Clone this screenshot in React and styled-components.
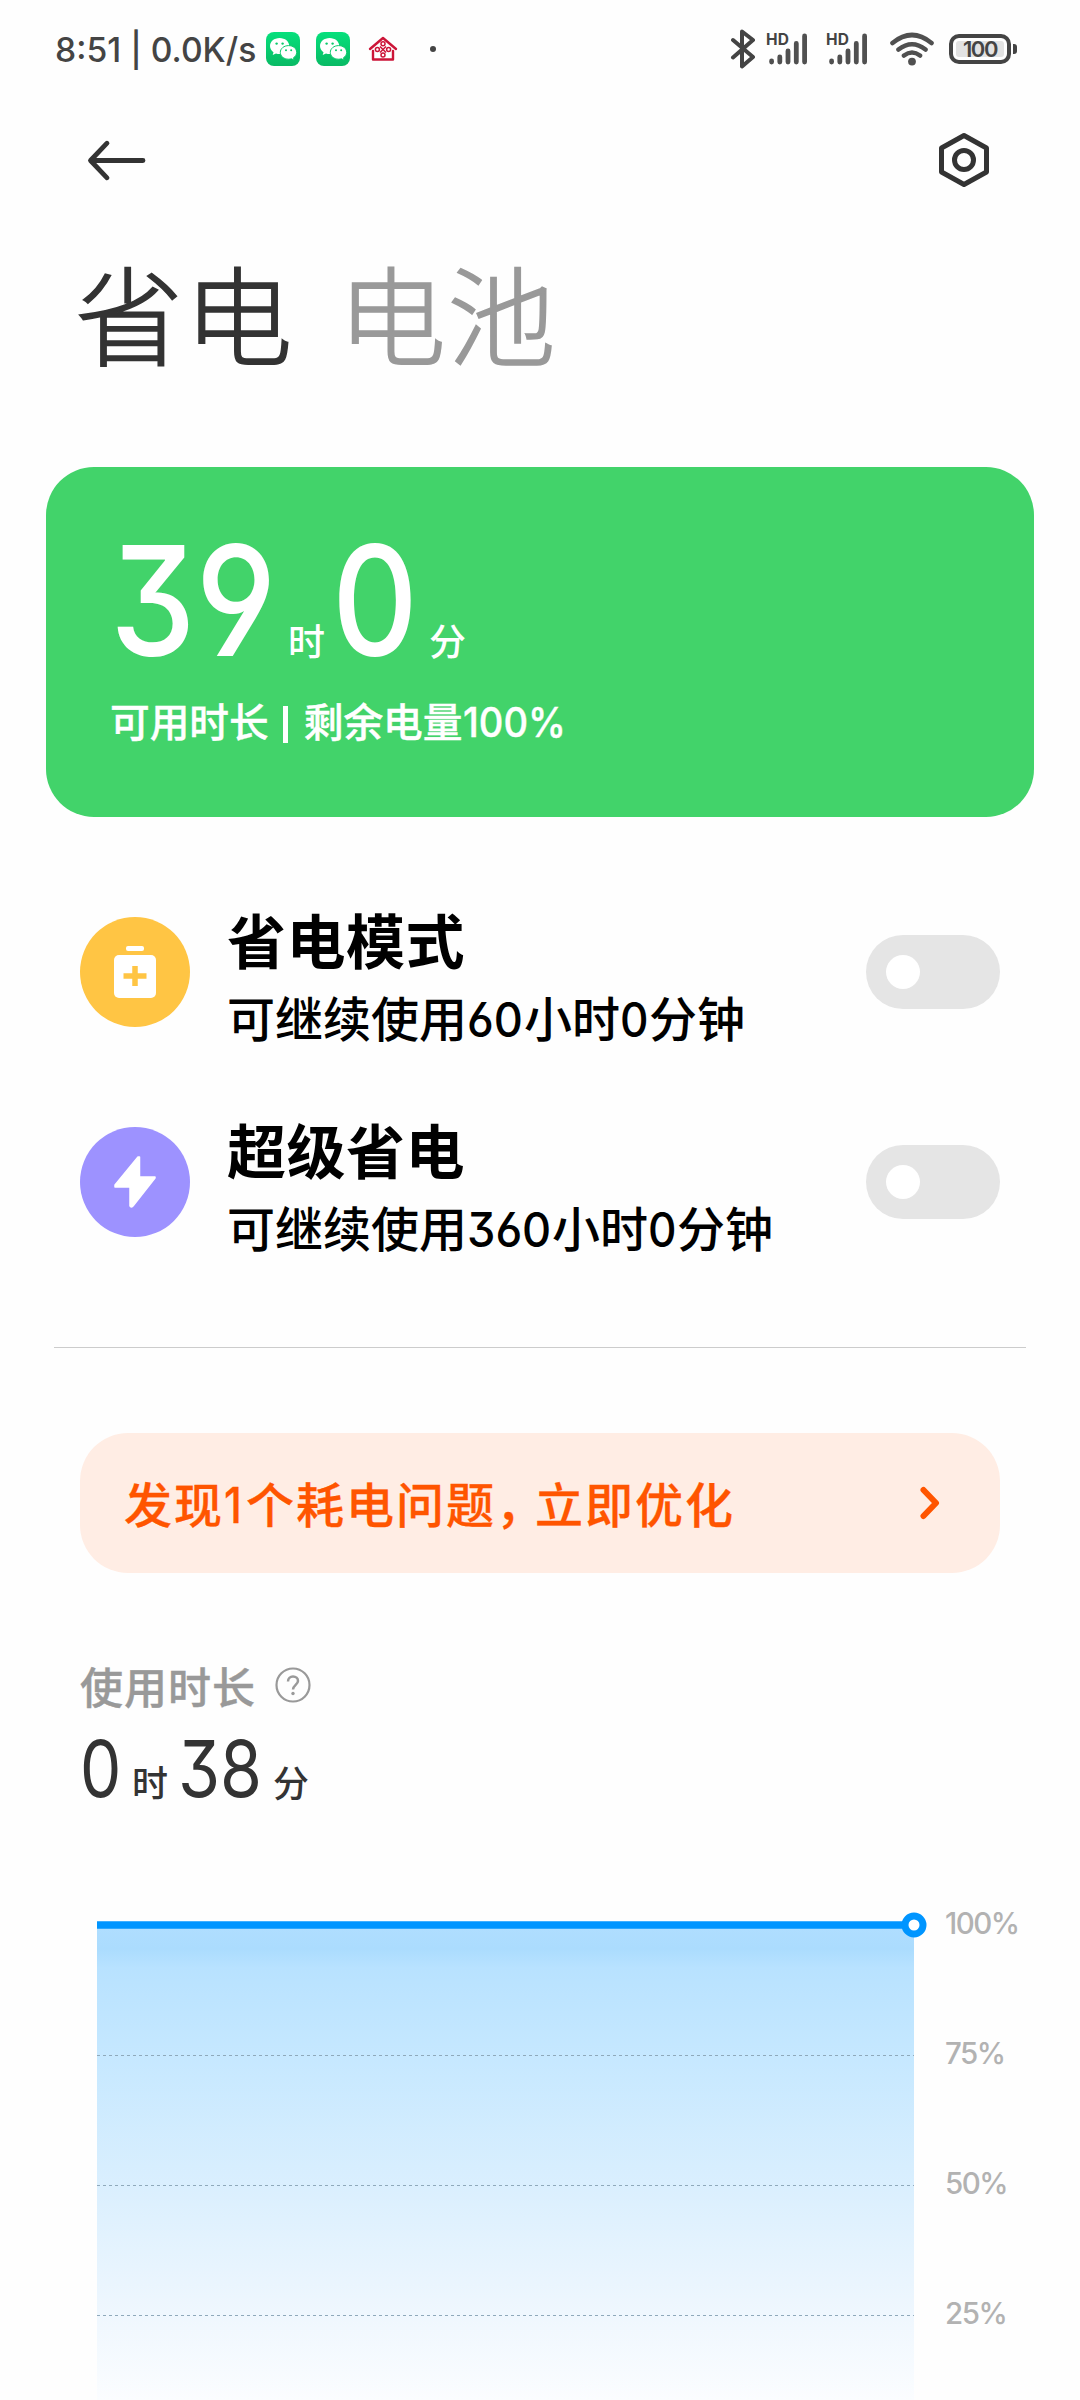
import React, { useState } from 'react'
import styled, { createGlobalStyle } from 'styled-components'

const GlobalStyle = createGlobalStyle`
  * {
    box-sizing: border-box;
  }
  body {
    margin: 0;
    background: #fefefe;
    font-family: 'Noto Sans CJK SC', 'Noto Sans', sans-serif;
    color: #333;
  }
`

const Screen = styled.div`
  width: 1080px;
  height: 2400px;
  overflow: hidden;
  background: #fefefe;
  display: flex;
  flex-direction: column;
`

// numbers and latin text, narrower than the font draws them
const Num = styled.span`
  display: inline-block;
  font-family: Inter, Roboto, sans-serif;
  font-feature-settings: 'cv09', 'ss01';
  font-size: ${({ size }) => size}px;
  font-weight: ${({ weight }) => weight || 500};
  line-height: 1;
  width: ${({ w }) => w}px;
  transform: scaleX(${({ squeeze }) => squeeze || 0.86});
  transform-origin: left;
  white-space: pre;
`

// status bar
const StatusBar = styled.header`
  height: 98px;
  flex-shrink: 0;
  padding: 0 63px 0 55px;
  display: flex;
  justify-content: space-between;
  align-items: center;
  color: #444;
`
const StatusSide = styled.div`
  display: flex;
  align-items: center;
`
const StatusText = styled.div`
  padding-top: 2px;
  display: flex;
`
const StatusIcon = styled.svg`
  display: block;
  flex-shrink: 0;
  margin-left: ${({ ml }) => ml || 0}px;
`
const Signal = styled.div`
  width: 42px;
  height: 32px;
  margin-left: ${({ ml }) => ml}px;
  display: grid;

  > * {
    grid-area: 1 / 1;
  }
`
const SignalLabel = styled.span`
  font: 700 15.5px/14px Inter, sans-serif;
  letter-spacing: 0.2px;
`
const Battery = styled.div`
  margin-left: 15px;
  width: 62px;
  height: 30px;
  border: 4px solid #444;
  border-radius: 10px;
  padding: 3px;
`
const BatteryLevel = styled.div`
  height: 16px;
  border-radius: 3px;
  background: #e2e2e2;
  display: flex;
  justify-content: center;
  align-items: center;
  font: 600 22px/16px Inter, sans-serif;
  letter-spacing: -1.4px;
`
const BatteryTip = styled.i`
  width: 4px;
  height: 10px;
  margin-left: 2px;
  border-radius: 0 3px 3px 0;
  background: #444;
`

// nav
const NavBar = styled.nav`
  height: 124px;
  flex-shrink: 0;
  padding: 0 90px 0 87px;
  display: flex;
  justify-content: space-between;
  align-items: center;
`

const Tabs = styled.div`
  height: 245px;
  flex-shrink: 0;
  padding: 24px 0 0 75px;
  display: flex;
  gap: 44px;
`
const Tab = styled.h1`
  margin: 0;
  font-size: 108px;
  font-weight: 300;
  line-height: 130px;
  letter-spacing: 1.5px;
  -webkit-text-stroke: 1.6px currentColor;
  color: ${({ $active }) => ($active ? '#333' : '#999')};
`

// green card
const Card = styled.section`
  height: 350px;
  flex-shrink: 0;
  margin: 0 46px;
  padding: 57px 0 0 64px;
  border-radius: 48px;
  background: #42d36a;
  color: #fff;
`
const Duration = styled.div`
  display: flex;
  align-items: baseline;
  height: ${({ h }) => h}px;
`
const Unit = styled.span`
  font-size: ${({ size }) => size}px;
  font-weight: 500;
  line-height: 1;
  margin-right: ${({ after }) => after || 0}px;
`
const CardNote = styled.p`
  margin: 0;
  font-size: 39.7px;
  font-weight: 500;
  line-height: 50px;
  white-space: pre;
  -webkit-text-stroke: 0.4px currentColor;
`
const Bar = styled.i`
  display: inline-block;
  width: 5px;
  height: 37px;
  margin: 0 16px 0 14px;
  vertical-align: -6px;
  background: currentColor;
`

// power modes
const Modes = styled.section`
  flex-shrink: 0;
  height: 531px;
  margin: 0 54px;
  padding-top: 50px;
  border-bottom: 1px solid #ccc;
`
const ModeRow = styled.div`
  height: 210px;
  padding: 0 26px;
  display: flex;
  align-items: center;
`
const ModeBadge = styled.div`
  width: 110px;
  height: 110px;
  border-radius: 50%;
  background: ${({ color }) => color};
  display: flex;
  justify-content: center;
  align-items: center;
`
const ModeText = styled.div`
  flex: 1;
  padding: 8px 0 0 37px;
  color: #000;
`
const ModeTitle = styled.h2`
  margin: 0;
  font-size: 59px;
  font-weight: 700;
  line-height: 80px;
  letter-spacing: 0.5px;
`
const ModeHint = styled.p`
  margin: 0;
  font-size: 48px;
  font-weight: 500;
  line-height: 74px;
  white-space: pre;
`
const Switch = styled.button`
  width: 134px;
  height: 74px;
  padding: 0 20px;
  border: 0;
  border-radius: 37px;
  background: ${({ $on }) => ($on ? '#42d36a' : '#e5e5e5')};
  display: flex;
  justify-content: ${({ $on }) => ($on ? 'flex-end' : 'flex-start')};
  align-items: center;
`
const Knob = styled.span`
  width: 34px;
  height: 34px;
  border-radius: 50%;
  background: #fff;
`

// warning banner
const Banner = styled.a`
  height: 140px;
  flex-shrink: 0;
  margin: 85px 80px 0;
  padding: 0 60px 0 44px;
  border-radius: 48px;
  background: #ffede4;
  color: #ff5500;
  display: flex;
  justify-content: space-between;
  align-items: center;
`
const BannerText = styled.span`
  margin-top: -3px;
  font-size: 48px;
  font-weight: 500;
  line-height: 72px;
  letter-spacing: 2px;
  -webkit-text-stroke: 0.3px currentColor;
`
// half-width comma
const Comma = styled.span`
  font-feature-settings: 'halt';
  margin-right: 13px;
`

// usage
const Usage = styled.section`
  flex-shrink: 0;
  height: 302px;
  padding: 80px 80px 0;
`
const UsageTitle = styled.h3`
  margin: 0 0 13px;
  height: 64px;
  display: flex;
  align-items: center;
  gap: 19px;
  font-size: 43px;
  font-weight: 500;
  letter-spacing: 1px;
  color: #999;
  -webkit-text-stroke: 0.4px currentColor;
`

// chart
const Chart = styled.section`
  flex: 1;
  padding-left: 97px;
  padding-top: 37px;
  display: flex;
`
const Labels = styled.div`
  padding-left: 16px;
  display: flex;
  flex-direction: column;
`
const Label = styled.span`
  height: 130px;
  font: 500 29.5px/22px Inter, sans-serif;
  letter-spacing: -1.5px;
  color: #b2b2b2;
`

const WeChat = ({ ml }) => (
  <StatusIcon ml={ml} width="34" height="34" viewBox="0 0 34 34">
    <defs>
      <linearGradient id="wx" x1="0" y1="0" x2="0" y2="1">
        <stop offset="0" stopColor="#06e07c" />
        <stop offset="1" stopColor="#08ba64" />
      </linearGradient>
    </defs>
    <rect width="34" height="34" rx="8" fill="url(#wx)" />
    <path d="M13.600 6C8.100 6 4 9.600 4 14c0 2.600 1.400 4.700 3.500 6.200L6.700 23l3.300-1.600c1.100.4 2.300.6 3.600.6 5.500 0 9.700-3.600 9.700-8S19.100 6 13.600 6z" fill="#fff" />
    <path d="M22.600 13.600c-4.700 0-8.300 3-8.300 6.800s3.600 6.800 8.300 6.800c1 0 2-.1 2.900-.4l2.700 1.300-.7-2.400c2-1.300 3.200-3.200 3.200-5.300 0-3.800-3.500-6.800-8.100-6.800z" fill="#fff" stroke="#0bc96c" strokeWidth="1" />
    <g fill="#0bc96c">
      <circle cx="10.600" cy="11.600" r="1.200" />
      <circle cx="16.600" cy="11.600" r="1.200" />
      <circle cx="20" cy="18.200" r="1" />
      <circle cx="25.200" cy="18.200" r="1" />
    </g>
  </StatusIcon>
)

const SignalIcon = ({ ml }) => (
  <Signal ml={ml}>
    <StatusIcon width="42" height="32" viewBox="0 0 42 32" stroke="#505050" strokeWidth="4.800" strokeLinecap="round">
      <path d="M5.600 28v1M13.800 24v5M22 18v11M30.300 10.500v18.500M38.600 3v26" />
    </StatusIcon>
    <SignalLabel>HD</SignalLabel>
  </Signal>
)

const BatteryIcon = () => (
  <svg width="42" height="54" viewBox="0 0 42 54">
    <rect x="12" y="1" width="18" height="5" rx="2" fill="#fff" />
    <rect x="0" y="10" width="42" height="43" rx="5" fill="#fff" />
    <path d="M21 21v20M9.500 31h23" stroke="#ffc544" strokeWidth="5.500" />
  </svg>
)

const BoltIcon = () => (
  <svg width="42" height="52" viewBox="0 0 42 52">
    <path d="M24 1 1 29v2h15v19q1 2 3 0L41 22v-1H25.500V1z" fill="#fff" stroke="#fff" strokeWidth="1.500" strokeLinejoin="round" />
  </svg>
)

const modes = [
  { title: '省电模式', hours: '60', numW: 57, color: '#ffc544', icon: <BatteryIcon /> },
  { title: '超级省电', hours: '360', numW: 85, color: '#9d92ff', icon: <BoltIcon /> },
]

const Mode = ({ title, hours, numW, color, icon }) => {
  const [on, setOn] = useState(false)

  return (
    <ModeRow>
      <ModeBadge color={color}>{icon}</ModeBadge>
      <ModeText>
        <ModeTitle>{title}</ModeTitle>
        <ModeHint>
          可继续使用<Num size={48} w={numW} squeeze={0.94}>{hours}</Num>小时<Num size={48} w={29} squeeze={0.92}>0</Num>分钟
        </ModeHint>
      </ModeText>
      <Switch $on={on} onClick={() => setOn(!on)}>
        <Knob />
      </Switch>
    </ModeRow>
  )
}

const App = () => {
  return (
    <Screen>
      <GlobalStyle />
      <StatusBar>
        <StatusSide>
          <StatusText>
            <Num size={34} w={203} weight={550} squeeze={0.99}>8:51 | 0.0K/s</Num>
          </StatusText>
          <WeChat ml={8} />
          <WeChat ml={16} />
          <StatusIcon ml={18} width="30" height="26" viewBox="0 0 30 26" fill="none" stroke="#cc1538">
            <path d="M2 13 15 2l13 11M5 15v8.500h20V15" strokeWidth="2.400" strokeLinecap="round" strokeLinejoin="round" />
            <g strokeWidth="1.500">
              <circle cx="15" cy="7.800" r="2" />
              <circle cx="15" cy="19" r="2" />
              <circle cx="9.400" cy="13.400" r="2" />
              <circle cx="20.600" cy="13.400" r="2" />
              <path d="M12 10.500l6 6M18 10.500l-6 6" />
            </g>
          </StatusIcon>
          <StatusIcon ml={32} width="6" height="6">
            <circle cx="3" cy="3" r="3" fill="#444" />
          </StatusIcon>
        </StatusSide>
        <StatusSide>
          <StatusIcon width="26" height="40" viewBox="0 0 26 40" fill="none" stroke="#444" strokeWidth="4" strokeLinecap="round" strokeLinejoin="round">
            <path d="M3 11l20 17-11 9.500V2.500L23 11 3 28.500" />
          </StatusIcon>
          <SignalIcon ml={10} />
          <SignalIcon ml={18} />
          <StatusIcon ml={20} width="46" height="34" viewBox="0 0 46 34" fill="none" stroke="#505050" strokeWidth="4.600" strokeLinecap="round">
            <path d="M4.500 11Q24-5 43.500 11M10.500 17.500q13.500-10.500 27 0M16 23.500q8-6 16 0" />
            <circle cx="24" cy="29.600" r="3.900" fill="#505050" stroke="none" />
          </StatusIcon>
          <Battery>
            <BatteryLevel>100</BatteryLevel>
          </Battery>
          <BatteryTip />
        </StatusSide>
      </StatusBar>

      <NavBar>
        <svg width="60" height="44" viewBox="0 0 60 44" fill="none" stroke="#333" strokeWidth="4.800" strokeLinecap="round" strokeLinejoin="round">
          <path d="M56 22.500H4M20 5.200 3.500 22.500 20 39.800" />
        </svg>
        <svg width="52" height="56" viewBox="0 0 52 56" fill="none" stroke="#333" strokeWidth="5" strokeLinejoin="round">
          <path d="M26 3.500 48.500 16v24L26 52.500 3.500 40V16z" />
          <circle cx="26" cy="28" r="9.500" />
        </svg>
      </NavBar>

      <Tabs>
        <Tab $active>省电</Tab>
        <Tab>电池</Tab>
      </Tabs>

      <Card>
        <Duration h={171}>
          <Num size={153} w={178} squeeze={0.89}>39</Num>
          <Unit size={37} after={7}>时</Unit>
          <Num size={153} w={97} squeeze={0.87}>0</Num>
          <Unit size={37}>分</Unit>
        </Duration>
        <CardNote>
          可用时长<Bar />剩余电量<Num size={40.500} w={100} squeeze={0.94}>100%</Num>
        </CardNote>
      </Card>

      <Modes>
        {modes.map((mode) => (
          <Mode key={mode.title} {...mode} />
        ))}
      </Modes>

      <Banner>
        <BannerText>
          发现<Num size={50} w={22}>1</Num>个耗电问题<Comma>，</Comma>立即优化
        </BannerText>
        <svg width="20" height="34" viewBox="0 0 20 34" fill="none" stroke="#ff5500" strokeWidth="6" strokeLinecap="round" strokeLinejoin="round">
          <path d="M3.500 4l12.500 13L3.500 30" />
        </svg>
      </Banner>

      <Usage>
        <UsageTitle>
          使用时长
          <svg width="36" height="36" viewBox="0 0 36 36" fill="none" stroke="#999" strokeWidth="2.200">
            <circle cx="18" cy="18" r="16.500" />
            <path d="M13 14.500c0-3 2.200-5 5-5s5 1.900 5 4.500c0 3.600-5 4.200-5 8.500" strokeWidth="2.500" />
            <circle cx="18" cy="26.500" r="1.700" fill="#999" stroke="none" />
          </svg>
        </UsageTitle>
        <Duration h={90}>
          <Num size={78} w={52} weight={430} squeeze={0.84}>0</Num>
          <Unit size={36} after={10}>时</Unit>
          <Num size={78} w={95} weight={430} squeeze={0.87}>38</Num>
          <Unit size={36}>分</Unit>
        </Duration>
      </Usage>

      <Chart>
        <svg width="832" height="488" viewBox="0 0 832 488">
          <defs>
            <linearGradient id="level" x1="0" y1="0" x2="0" y2="1">
              <stop offset="0" stopColor="#b0deff" />
              <stop offset="0.05" stopColor="#abdcfe" />
              <stop offset="0.09" stopColor="#b8e2ff" />
              <stop offset="0.28" stopColor="#c6e8ff" />
              <stop offset="0.55" stopColor="#daeffe" />
              <stop offset="0.82" stopColor="#eff7fe" />
              <stop offset="1" stopColor="#fbfdff" />
            </linearGradient>
          </defs>
          <rect x="0" y="13" width="817" height="475" fill="url(#level)" />
          <path d="M0 143.500h817M0 273.500h817M0 403.500h817" stroke="#8fa9bb" strokeDasharray="3 3" />
          <path d="M0 13h817" stroke="#0095ff" strokeWidth="7.500" />
          <circle cx="817" cy="13" r="9" fill="#fff" stroke="#0095ff" strokeWidth="7" />
        </svg>
        <Labels>
          <Label>100%</Label>
          <Label>75%</Label>
          <Label>50%</Label>
          <Label>25%</Label>
        </Labels>
      </Chart>
    </Screen>
  )
}

export default App
